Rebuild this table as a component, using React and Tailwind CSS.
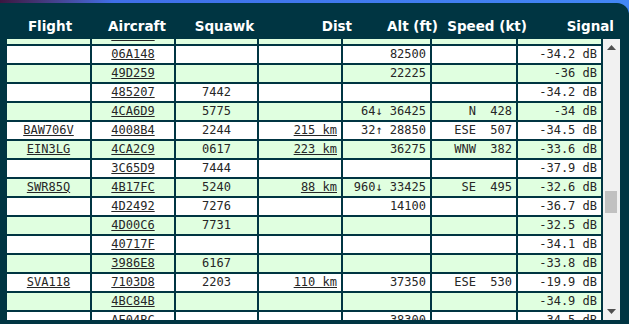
import { useLayoutEffect, useRef } from "react";

const rows = [
  { flight: "", hex: "4CA7B1", squawk: "", dist: "", alt: "", speed: "", signal: "-35.1 dB" },
  { flight: "", hex: "06A148", squawk: "", dist: "", alt: "82500", speed: "", signal: "-34.2 dB" },
  { flight: "", hex: "49D259", squawk: "", dist: "", alt: "22225", speed: "", signal: "-36 dB" },
  { flight: "", hex: "485207", squawk: "7442", dist: "", alt: "", speed: "", signal: "-34.2 dB" },
  { flight: "", hex: "4CA6D9", squawk: "5775", dist: "", alt: "64↓ 36425", speed: "  N  428", signal: "-34 dB" },
  { flight: "BAW706V", hex: "4008B4", squawk: "2244", dist: "215 km", alt: "32↑ 28850", speed: "ESE  507", signal: "-34.5 dB" },
  { flight: "EIN3LG", hex: "4CA2C9", squawk: "0617", dist: "223 km", alt: "36275", speed: "WNW  382", signal: "-33.6 dB" },
  { flight: "", hex: "3C65D9", squawk: "7444", dist: "", alt: "", speed: "", signal: "-37.9 dB" },
  { flight: "SWR85Q", hex: "4B17FC", squawk: "5240", dist: "88 km", alt: "960↓ 33425", speed: " SE  495", signal: "-32.6 dB" },
  { flight: "", hex: "4D2492", squawk: "7276", dist: "", alt: "14100", speed: "", signal: "-36.7 dB" },
  { flight: "", hex: "4D00C6", squawk: "7731", dist: "", alt: "", speed: "", signal: "-32.5 dB" },
  { flight: "", hex: "40717F", squawk: "", dist: "", alt: "", speed: "", signal: "-34.1 dB" },
  { flight: "", hex: "3986E8", squawk: "6167", dist: "", alt: "", speed: "", signal: "-33.8 dB" },
  { flight: "SVA118", hex: "7103D8", squawk: "2203", dist: "110 km", alt: "37350", speed: "ESE  530", signal: "-19.9 dB" },
  { flight: "", hex: "4BC84B", squawk: "", dist: "", alt: "", speed: "", signal: "-34.9 dB" },
  { flight: "", hex: "AE04BC", squawk: "", dist: "", alt: "38300", speed: "", signal: "-34.5 dB" },
];

const App = () => {
  const listRef = useRef(null);

  // list is scrolled part way down
  useLayoutEffect(() => {
    if (listRef.current) listRef.current.scrollTop = 14;
  }, []);

  return (
    <div className="w-[629px] h-[324px] overflow-hidden bg-gradient-to-r from-[#3a1640] via-[#3f6fe8] via-[18%] to-[#4287f5]">
      <div className="mt-[3px] h-[321px] bg-[#003542] rounded-tr-[12px] flex flex-col">
        {/* Header */}
        <div className="h-[36px] shrink-0 pt-[10px] flex items-center text-white font-bold text-[13.5px] font-['DejaVu_Sans',sans-serif] pl-[7px]">
          <div className="w-[86px] text-center">Flight</div>
          <div className="w-[88px] text-center">Aircraft</div>
          <div className="w-[87px] text-center">Squawk</div>
          <div className="w-[87px] text-right pr-[3px]">Dist</div>
          <div className="w-[87px] text-right pr-[4px]">Alt (ft)</div>
          <div className="w-[88px] text-right pr-[3px]">Speed (kt)</div>
          <div className="w-[88px] text-right pr-[4px]">Signal</div>
        </div>

        {/* Body */}
        <div className="h-[281px] shrink-0 flex pl-[5px] pr-[9px]">
          <div ref={listRef} className="w-[598px] h-full overflow-hidden">
            <table className="table-fixed border-separate border-spacing-[2px] w-[598px] text-[12px] leading-[15px] text-[#262626] font-['DejaVu_Sans_Mono',monospace]">
              <colgroup>
                <col className="w-[83px]" />
                <col className="w-[82px]" />
                <col className="w-[81px]" />
                <col className="w-[82px]" />
                <col className="w-[87px]" />
                <col className="w-[84px]" />
                <col className="w-[83px]" />
              </colgroup>
              <tbody>
                {rows.map((r, i) => (
                  <tr key={i} className={i % 2 === 0 ? "bg-[#e0ffe0]" : "bg-white"}>
                    <td className="h-[17px] p-0 text-center">
                      {r.flight && <a className="underline">{r.flight}</a>}
                    </td>
                    <td className="h-[17px] p-0 text-center">
                      <a className="underline">{r.hex}</a>
                    </td>
                    <td className="h-[17px] p-0 text-center">{r.squawk}</td>
                    <td className="h-[17px] p-0 pr-[4px] text-right">
                      {r.dist && <a className="underline">{r.dist}</a>}
                    </td>
                    <td className="h-[17px] p-0 pr-[4px] text-right whitespace-pre">{r.alt}</td>
                    <td className="h-[17px] p-0 pr-[4px] text-right whitespace-pre">{r.speed}</td>
                    <td className="h-[17px] p-0 pr-[4px] text-right">{r.signal}</td>
                  </tr>
                ))}
              </tbody>
            </table>
          </div>

          {/* Scrollbar */}
          <div className="w-[17px] h-full bg-[#f1f1f1] flex flex-col">
            <div className="h-[17px] flex items-center justify-center">
              <svg width="9" height="5" viewBox="0 0 9 5">
                <path d="M4.5 0 L9 5 L0 5 Z" fill="#505050" />
              </svg>
            </div>
            <div className="flex-1 flex flex-col">
              <div className="h-[135px]" />
              <div className="h-[22px] w-[12px] ml-[2px] bg-[#c1c1c1]" />
            </div>
            <div className="h-[17px] flex items-center justify-center">
              <svg width="9" height="5" viewBox="0 0 9 5">
                <path d="M0 0 L9 0 L4.5 5 Z" fill="#505050" />
              </svg>
            </div>
          </div>
        </div>
      </div>
    </div>
  );
};

export default App;
